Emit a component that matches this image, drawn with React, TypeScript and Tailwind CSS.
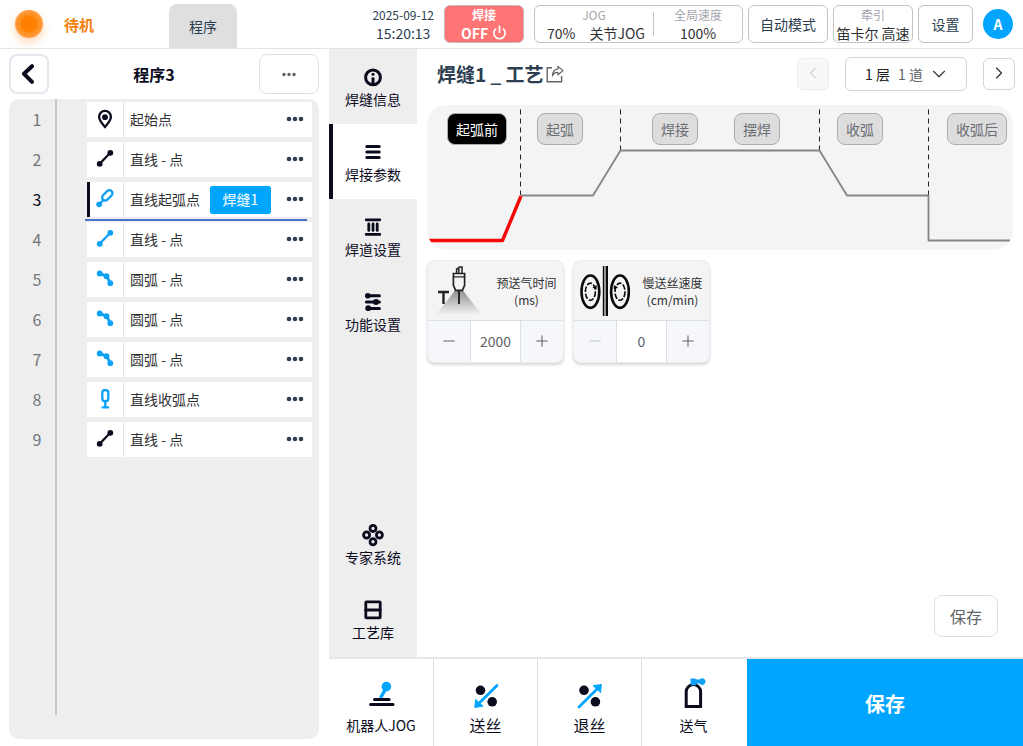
import { useState } from "react";
import type { ReactNode } from "react";
import { ChevronDown, ChevronLeft, ChevronRight, Minus, Plus, Power } from "lucide-react";
import clsx from "clsx";

type StepKind = "start" | "line" | "arc" | "arcOn" | "arcOff";

interface Step {
  kind: StepKind;
  label: string;
  inSeam?: boolean;
  seam?: string;
}

const STEPS: Step[] = [
  { kind: "start", label: "起始点" },
  { kind: "line", label: "直线 - 点" },
  { kind: "arcOn", label: "直线起弧点", inSeam: true, seam: "焊缝1" },
  { kind: "line", label: "直线 - 点", inSeam: true },
  { kind: "arc", label: "圆弧 - 点", inSeam: true },
  { kind: "arc", label: "圆弧 - 点", inSeam: true },
  { kind: "arc", label: "圆弧 - 点", inSeam: true },
  { kind: "arcOff", label: "直线收弧点", inSeam: true },
  { kind: "line", label: "直线 - 点" },
];

function Dots({ className, r = 2 }: { className?: string; r?: number }) {
  return (
    <svg width="18" height="6" viewBox="0 0 18 6" fill="currentColor" className={className}>
      <circle cx="3" cy="3" r={r} />
      <circle cx="9" cy="3" r={r} />
      <circle cx="15" cy="3" r={r} />
    </svg>
  );
}

function StepIcon({ kind }: { kind: StepKind }) {
  return (
    <svg width="20" height="20" viewBox="0 0 20 20" fill="none" stroke="currentColor" strokeWidth="2.3">
      {kind === "start" && (
        <>
          <path d="M10 18C7.4 14.8 4.1 11.6 4.1 7.8a5.9 5.9 0 0 1 11.8 0C15.9 11.6 12.6 14.8 10 18Z" />
          <circle cx="10" cy="8.2" r="2.9" fill="currentColor" stroke="none" />
        </>
      )}
      {kind === "line" && (
        <>
          <path d="M4.7 14.8 15.3 3.8" />
          <circle cx="4.7" cy="14.8" r="2.9" fill="currentColor" stroke="none" />
          <circle cx="15.3" cy="3.8" r="2.9" fill="currentColor" stroke="none" />
        </>
      )}
      {kind === "arcOn" && (
        <>
          <path d="M4 15.5 9 10.5" />
          <rect x="9.2" y="0.4" width="6.2" height="12" rx="3.1" transform="rotate(45 12.3 6.4)" />
          <circle cx="4.2" cy="15.3" r="2.9" fill="currentColor" stroke="none" />
        </>
      )}
      {kind === "arc" && (
        <>
          <path d="M4.7 4.5 11.5 7.2 15.3 14.2" strokeWidth="2.8" />
          <circle cx="4.7" cy="4.5" r="2.9" fill="currentColor" stroke="none" />
          <circle cx="11.5" cy="7.2" r="2.9" fill="currentColor" stroke="none" />
          <circle cx="15.3" cy="14.2" r="2.9" fill="currentColor" stroke="none" />
        </>
      )}
      {kind === "arcOff" && (
        <>
          <rect x="7.3" y="1" width="6" height="11.4" rx="2.8" />
          <path d="M10.3 12v6M7.6 18.4h5.6" strokeLinecap="round" />
        </>
      )}
    </svg>
  );
}

const NAV_TOP = [
  {
    label: "焊缝信息",
    icon: (
      <>
        <circle cx="10" cy="10.4" r="7.4" />
        <path d="M10 10.4V17" strokeLinecap="butt" />
        <circle cx="10" cy="7.2" r="1.5" fill="currentColor" stroke="none" />
      </>
    ),
  },
  { label: "焊接参数", icon: <path d="M3.8 4.5h12.4M3.8 10h12.4M3.8 15.5h12.4" /> },
  {
    label: "焊道设置",
    icon: <path d="M3.2 2.8h13.6M3.2 17.4h13.6M5.8 7v6.4M10 7v6.4M14.2 7v6.4" strokeWidth="2.8" />,
  },
  {
    label: "功能设置",
    icon: (
      <>
        <path d="M4 3.8h12.4M3.4 10h13M6 16.4h10.4" strokeWidth="3" />
        <circle cx="4.8" cy="3.8" r="2.8" fill="currentColor" stroke="none" />
        <circle cx="13" cy="10" r="3" fill="currentColor" stroke="none" />
        <circle cx="5.2" cy="16.2" r="2.9" fill="currentColor" stroke="none" />
      </>
    ),
  },
];

const NAV_BOTTOM = [
  {
    label: "专家系统",
    icon: (
      <>
        <ellipse cx="10" cy="3.4" rx="3" ry="3.1" strokeWidth="2.8" />
        <ellipse cx="3.6" cy="10" rx="3" ry="3.1" strokeWidth="2.8" />
        <ellipse cx="16.4" cy="10" rx="3" ry="3.1" strokeWidth="2.8" />
        <ellipse cx="10" cy="16.8" rx="3" ry="3.1" strokeWidth="2.8" />
      </>
    ),
  },
  {
    label: "工艺库",
    icon: (
      <>
        <rect x="2.8" y="1.8" width="14.4" height="16" rx="0.6" strokeWidth="2.8" />
        <path d="M2.8 10h14.4" strokeWidth="2.8" />
      </>
    ),
  },
];

// Columns follow the dashed phase borders of the curve
const PHASES = [
  { pad: "pl-5", items: ["起弧前"] },
  { pad: "pl-[17px]", items: ["起弧"] },
  { pad: "pl-8", items: ["焊接", "摆焊"] },
  { pad: "pl-[17px]", items: ["收弧"] },
  { pad: "pl-[19px]", items: ["收弧后"] },
];

function NavItem({
  label,
  icon,
  active,
  onClick,
}: {
  label: string;
  icon: ReactNode;
  active: boolean;
  onClick: () => void;
}) {
  return (
    <button
      type="button"
      onClick={onClick}
      className={clsx(
        "flex h-[75px] w-full flex-col items-center gap-[2px] border-l-4 pt-[18px] pr-1 text-sm leading-5",
        active ? "border-[#0b0b1e] bg-white" : "border-transparent"
      )}
    >
      <svg
        width="20"
        height="20"
        viewBox="0 0 20 20"
        fill="none"
        stroke="currentColor"
        strokeWidth="3"
        strokeLinecap="round"
        className="shrink-0 overflow-visible"
      >
        {icon}
      </svg>
      {label}
    </button>
  );
}

function Header() {
  return (
    <header className="flex h-[49px] shrink-0 items-center border-b border-[#e4e4e4] pr-[10px] text-[#2c3e50]">
      <div className="ml-[15px] flex size-7 items-center justify-center rounded-full bg-radial from-[#ff8f1f] from-50% to-[#ffb46c] shadow-[0_4px_8px_rgba(255,140,30,0.35)]">
        <div className="size-4 rounded-full bg-[#ff7f00]" />
      </div>
      <span className="ml-[21px] pt-[2px] text-[15px] font-bold text-[#f5820f]">待机</span>
      <button type="button" className="mt-1 ml-[75px] w-[68px] self-stretch rounded-t-lg bg-[#dfdfdf] text-sm">
        程序
      </button>

      <div className="ml-auto flex flex-col items-center">
        <span className="text-xs leading-[18px]">2025-09-12</span>
        <span className="text-sm leading-[18px]">15:20:13</span>
      </div>
      <button
        type="button"
        className="ml-[10px] flex h-[38px] w-20 flex-col items-center rounded-md border border-[#c9b5b7] bg-[#ff7575] font-bold text-white"
      >
        <span className="text-xs leading-[18px]">焊接</span>
        <span className="flex items-center gap-1 text-sm leading-[18px]">
          OFF <Power size={15} strokeWidth={2.6} className="-mt-px" />
        </span>
      </button>
      <button
        type="button"
        className="ml-[10px] flex h-[38px] w-[209px] items-center rounded-md border border-[#c4c4c4]"
      >
        <span className="flex w-[118px] flex-col items-center">
          <span className="text-xs leading-[18px] text-[#a3a6ad]">JOG</span>
          <span className="flex gap-[14px] pl-1 text-sm leading-[18px] text-[#303133]">
            <span>70%</span>
            <span>关节JOG</span>
          </span>
        </span>
        <span className="h-6 w-px bg-[#c4c4c4]" />
        <span className="flex flex-1 flex-col items-center">
          <span className="text-xs leading-[18px] text-[#a3a6ad]">全局速度</span>
          <span className="text-sm leading-[18px] text-[#303133]">100%</span>
        </span>
      </button>
      <button type="button" className="ml-[5px] h-[38px] w-20 rounded-md border border-[#c4c4c4] text-sm">
        自动模式
      </button>
      <button
        type="button"
        className="ml-[5px] flex h-[38px] w-20 flex-col items-center rounded-md border border-[#c4c4c4] whitespace-nowrap"
      >
        <span className="text-xs leading-[18px] text-[#a3a6ad]">牵引</span>
        <span className="text-sm leading-[18px] text-[#303133]">笛卡尔 高速</span>
      </button>
      <button type="button" className="ml-[5px] h-[38px] w-[55px] rounded-md border border-[#c4c4c4] text-sm">
        设置
      </button>
      <button type="button" className="ml-[10px] size-[30px] rounded-full bg-[#00a5ff] text-sm font-bold text-white">
        A
      </button>
    </header>
  );
}

function ProgramPanel() {
  const [selected, setSelected] = useState(2);

  return (
    <aside className="flex w-[329px] shrink-0 flex-col px-[10px] pt-[5px] pb-[7px] pl-[9px]">
      <div className="flex items-center justify-between">
        <button
          type="button"
          aria-label="返回"
          className="flex size-10 items-center justify-center rounded-lg border-2 border-[#e6e6ee] pr-[2px]"
        >
          <svg width="14" height="20" viewBox="0 0 14 20" fill="none" stroke="currentColor" strokeWidth="4" strokeLinecap="round" strokeLinejoin="round">
            <path d="M11 2.2 3 9.8l8 8" />
          </svg>
        </button>
        <h1 className="text-base font-bold">程序3</h1>
        <button
          type="button"
          aria-label="更多"
          className="flex h-10 w-[60px] items-center justify-center rounded-lg border border-[#dcdfe6] text-[#606266]"
        >
          <Dots r={2} className="h-[5px] w-4" />
        </button>
      </div>

      <div className="relative mt-[5px] flex-1 rounded-[10px] bg-[#eeeeee] pt-[3px]">
        <div className="absolute top-0 bottom-6 left-[46px] w-[2px] bg-[#c8c8c8]" />
        <ol className="flex flex-col gap-[5px]">
          {STEPS.map((step, i) => (
            <li key={i} className="relative flex h-[35px] items-center pr-[7px]">
              <span
                className={clsx(
                  "w-[56px] shrink-0 pb-px text-center text-base",
                  i === selected ? "text-[#0b0b1e]" : "text-[#73767a]"
                )}
              >
                {i + 1}
              </span>
              <div
                onClick={() => setSelected(i)}
                className="relative ml-[22px] flex h-full flex-1 items-center bg-white"
              >
                {i === selected && <span className="absolute inset-y-0 left-0 w-[3px] bg-[#0b0b1e]" />}
                <span
                  className={clsx(
                    "flex h-full w-[37px] items-center justify-center border-r border-[#e4e4e4] pb-px",
                    step.inSeam && "text-[#0ea0f5]"
                  )}
                >
                  <StepIcon kind={step.kind} />
                </span>
                <span className="ml-[6px] pb-px text-sm text-[#303133]">{step.label}</span>
                {step.seam && (
                  <button type="button" className="ml-[10px] h-7 w-[61px] rounded-xs bg-[#00a5ff] pb-px text-sm text-white">
                    {step.seam}
                  </button>
                )}
                <button type="button" aria-label="操作" className="mr-2 ml-auto pb-px text-[#2c3e50]">
                  <Dots r={2.3} />
                </button>
              </div>
              {i === selected && <span className="absolute -bottom-1 left-[76px] h-[2px] w-[222px] bg-[#4874cb]" />}
            </li>
          ))}
        </ol>
      </div>
    </aside>
  );
}

function PhaseChart() {
  const [phase, setPhase] = useState("起弧前");

  return (
    <div className="relative h-[145px] overflow-hidden rounded-[20px] bg-[#f4f4f4]">
      <svg
        className="absolute inset-0 size-full"
        viewBox="0 0 586 145"
        preserveAspectRatio="none"
        fill="none"
        strokeLinejoin="round"
      >
        <g stroke="#222222" strokeWidth="1" strokeDasharray="5 4">
          <path d="M93.5 4.5V90M193.5 4.5V45M392.5 4.5V45M501.5 4.5V90" />
        </g>
        <path
          d="M94 90.5H166L193.5 45.5H392.5L420 90.5H501.5V135.5H583"
          stroke="#858585"
          strokeWidth="1.8"
        />
        <path d="M2 135.5H75.5L94 91" stroke="#f50a0a" strokeWidth="3.4" />
      </svg>
      <div className="relative grid grid-cols-[93fr_100fr_200fr_108fr_85fr] pt-2">
        {PHASES.map(({ pad, items }) => (
          <div key={items[0]} className={clsx("flex min-w-0 gap-9", pad)}>
            {items.map((name) => (
              <button
                key={name}
                type="button"
                onClick={() => setPhase(name)}
                className={clsx(
                  "h-8 shrink-0 rounded-lg border border-[#adadad] px-2 pb-px text-sm",
                  name === phase ? "bg-black text-white" : "bg-[#dddddd] text-[#6b6e73]"
                )}
              >
                {name}
              </button>
            ))}
          </div>
        ))}
      </div>
    </div>
  );
}

function GasIcon() {
  return (
    <svg width="50" height="50" viewBox="0 0 50 50" fill="none" stroke="#222222" className="shrink-0">
      <defs>
        <linearGradient id="gas-spray" x1="0" y1="0" x2="0" y2="1">
          <stop offset="0" stopColor="#8f8f8f" />
          <stop offset="1" stopColor="#f4f4f4" />
        </linearGradient>
      </defs>
      <path d="M21 24.5h8L48 49H2Z" fill="url(#gas-spray)" stroke="none" />
      <path d="M22.6 7V3l2.2-1V7M24.6 1h3.4v6" strokeWidth="1.5" />
      <path d="M19.4 7.5V19.4l2.2 5h6.8l2.2-5V7.5Z" strokeWidth="1.7" fill="#f4f4f4" />
      <path d="M19.4 10.8h11.2" strokeWidth="1.3" />
      <path d="M25 25v13" strokeWidth="1.9" />
      <path d="M4 26h11M9.5 26v12" strokeWidth="2.4" />
    </svg>
  );
}

function WireIcon() {
  return (
    <svg width="50" height="50" viewBox="0 0 50 50" fill="none" stroke="#0a0a0a" className="shrink-0">
      <ellipse cx="10.4" cy="25.7" rx="8.9" ry="16.2" strokeWidth="2.6" />
      <ellipse cx="10.4" cy="25.7" rx="5" ry="8.6" strokeWidth="1.6" strokeDasharray="5.4 1.7" />
      <path d="M12.4 21.4 16.6 19v4.6Z" fill="#0a0a0a" stroke="none" />
      <ellipse cx="40" cy="25.7" rx="8.9" ry="16.2" strokeWidth="2.6" />
      <ellipse cx="40" cy="25.7" rx="5" ry="8.6" strokeWidth="1.6" strokeDasharray="5.4 1.7" />
      <path d="M38 21.4 33.8 19v4.6Z" fill="#0a0a0a" stroke="none" />
      <path d="M23.6 0v50" strokeWidth="1.6" />
      <path d="M26.8 0v50" strokeWidth="2.4" />
    </svg>
  );
}

function ParamCard({
  id,
  name,
  unit,
  icon,
  initial,
  step,
}: {
  id: string;
  name: string;
  unit: string;
  icon: ReactNode;
  initial: number;
  step: number;
}) {
  const [value, setValue] = useState(initial);

  return (
    <div className="w-[137px] overflow-hidden rounded-lg border border-[#ececf0] bg-[#f4f4f4] shadow-[0_2px_3px_rgba(0,0,0,0.16)]">
      <div className="flex h-[59px] items-center pl-[6px]">
        {icon}
        <label htmlFor={id} className="flex flex-1 flex-col items-center pl-[6px] text-xs leading-[17px] whitespace-nowrap text-[#303133]">
          <span>{name}</span>
          <span>({unit})</span>
        </label>
      </div>
      <div className="flex h-[42px] border-t border-[#dcdfe6] text-[#606266]">
        <button
          type="button"
          aria-label="减少"
          disabled={value <= 0}
          onClick={() => setValue(Math.max(0, value - step))}
          className="flex w-[42px] items-center justify-center bg-[#f5f7fa] pb-px disabled:text-[#c0c4cc]"
        >
          <Minus size={18} strokeWidth={1.4} />
        </button>
        <input
          id={id}
          inputMode="numeric"
          value={value}
          onChange={(e) => setValue(Number(e.target.value) || 0)}
          className="min-w-0 flex-1 border-x border-[#dcdfe6] bg-white pb-px text-center text-sm outline-none"
        />
        <button
          type="button"
          aria-label="增加"
          onClick={() => setValue(value + step)}
          className="flex w-[42px] items-center justify-center bg-[#f5f7fa] pb-px"
        >
          <Plus size={18} strokeWidth={1.4} />
        </button>
      </div>
    </div>
  );
}

function ProcessEditor() {
  return (
    <main className="flex min-w-0 flex-1 flex-col px-[10px]">
      <div className="flex h-[50px] items-center pl-[10px]">
        <h2 className="text-[19px] leading-7 font-bold text-[#2c3e50]">焊缝1 _ 工艺</h2>
        <button type="button" aria-label="导出" className="ml-[2px] text-[#606266]">
          <svg width="18" height="18" viewBox="0 0 18 18" fill="none" stroke="currentColor" strokeWidth="1.4" strokeLinejoin="round">
            <path d="M6 2.8H1.2V16.8H15.6V11" />
            <path d="M12 1.4 17 5.6 12 9.8V7.4C9 7.2 7.4 8.6 6.4 11 6.6 7 8.6 4.2 12 3.8Z" strokeWidth="1.2" />
          </svg>
        </button>
        <button
          type="button"
          disabled
          aria-label="上一道"
          className="ml-auto flex size-8 items-center justify-center rounded-md border border-[#ebebeb] bg-[#f8f8f8] pb-[2px] text-[#b4b7bd]"
        >
          <ChevronLeft size={20} strokeWidth={1.2} />
        </button>
        <div className="mx-4 flex h-[34px] w-[122px] items-center rounded-md border border-[#d4d4d4] pl-[19px] text-sm">
          <select aria-label="层" className="appearance-none text-[#1d1e20] outline-none">
            <option>1 层</option>
          </select>
          <select aria-label="道" className="ml-2 appearance-none text-[#606266] outline-none">
            <option>1 道</option>
          </select>
          <ChevronDown size={22} strokeWidth={1.2} className="ml-[5px] text-[#303133]" />
        </div>
        <button
          type="button"
          aria-label="下一道"
          className="-mr-[2px] flex size-8 items-center justify-center rounded-md border border-[#d4d4d4] pb-[2px] text-[#303133]"
        >
          <ChevronRight size={20} strokeWidth={1.4} />
        </button>
      </div>

      <div className="mt-[6px]">
        <PhaseChart />
      </div>

      <div className="mt-[10px] flex gap-[9px]">
        <ParamCard id="pre-gas" name="预送气时间" unit="ms" icon={<GasIcon />} initial={2000} step={100} />
        <ParamCard id="slow-feed" name="慢送丝速度" unit="cm/min" icon={<WireIcon />} initial={0} step={10} />
      </div>

      <button
        type="button"
        className="mt-auto mr-[15px] mb-5 h-[42px] w-16 self-end rounded-lg border border-[#dcdfe6] text-base text-[#606266]"
      >
        保存
      </button>
    </main>
  );
}

const ACTIONS = [
  {
    label: "机器人JOG",
    size: "text-sm",
    icon: (
      <>
        <path d="m14.5 17 5-9" stroke="#00a5ff" strokeWidth="3.4" />
        <circle cx="20.4" cy="5.6" r="4.8" fill="#00a5ff" />
        <path d="M8.5 18.6h14.6M4.6 23.6h22.4" stroke="currentColor" strokeWidth="3" strokeLinecap="round" />
      </>
    ),
  },
  {
    label: "送丝",
    size: "text-base",
    icon: (
      <>
        <circle cx="9.5" cy="9.3" r="4.8" fill="currentColor" />
        <circle cx="21.2" cy="20.8" r="4.8" fill="currentColor" />
        <path d="M26 4.4 8 22.2" stroke="#00a5ff" strokeWidth="2.8" strokeLinecap="round" />
        <path d="M4.6 18.4 12 25.2 3.8 26.4Z" fill="#00a5ff" stroke="#00a5ff" strokeLinejoin="round" />
      </>
    ),
  },
  {
    label: "退丝",
    size: "text-base",
    icon: (
      <>
        <circle cx="9" cy="9.3" r="4.8" fill="currentColor" />
        <circle cx="20.4" cy="20.8" r="4.8" fill="currentColor" />
        <path d="M4 26 22 8" stroke="#00a5ff" strokeWidth="2.8" strokeLinecap="round" />
        <path d="M18 4.6 26.4 3.6 25.6 11.6Z" fill="#00a5ff" stroke="#00a5ff" strokeLinejoin="round" />
      </>
    ),
  },
  {
    label: "送气",
    size: "text-sm",
    icon: (
      <>
        <path d="M7.2 25.4V10.8a7.2 7.2 0 0 1 14.4 0v14.6Z" stroke="currentColor" strokeWidth="3" />
        <path d="M11.6-2.4h4l2.4 1h2.6A3.3 3.3 0 1 1 20.6 2.6h-2.4l-1.6 1.6h-5Z" fill="#0ea0f5" />
      </>
    ),
  },
];

function ActionBar() {
  return (
    <footer className="flex h-[89px] shrink-0 border-t-2 border-[#e6e8e8]">
      {ACTIONS.map(({ label, size, icon }) => (
        <button
          key={label}
          type="button"
          className={clsx(
            "flex w-[104px] flex-col items-center gap-1 pt-[22px] leading-5 not-first:border-l not-first:border-[#dddddd]",
            size
          )}
        >
          <svg width="30" height="30" viewBox="0 0 30 30" fill="none" className="shrink-0 overflow-visible">
            {icon}
          </svg>
          <span className="leading-5">{label}</span>
        </button>
      ))}
      <button type="button" className="ml-[2px] flex-1 bg-[#00a5ff] pt-[2px] text-xl font-bold text-white">
        保存
      </button>
    </footer>
  );
}

export default function App() {
  const [tab, setTab] = useState("焊接参数");

  return (
    <div className="flex h-screen flex-col overflow-hidden bg-white font-['Noto_Sans_CJK_SC',sans-serif] text-[#0b0b1e]">
      <Header />
      <div className="flex min-h-0 flex-1">
        <ProgramPanel />
        <div className="flex min-w-0 flex-1 flex-col">
          <div className="flex min-h-0 flex-1">
            <nav className="flex w-[88px] shrink-0 flex-col bg-[#eeeeee]">
              {NAV_TOP.map((item) => (
                <NavItem key={item.label} {...item} active={tab === item.label} onClick={() => setTab(item.label)} />
              ))}
              <div className="mt-auto">
                {NAV_BOTTOM.map((item) => (
                  <NavItem key={item.label} {...item} active={tab === item.label} onClick={() => setTab(item.label)} />
                ))}
              </div>
            </nav>
            <ProcessEditor />
          </div>
          <ActionBar />
        </div>
      </div>
    </div>
  );
}
